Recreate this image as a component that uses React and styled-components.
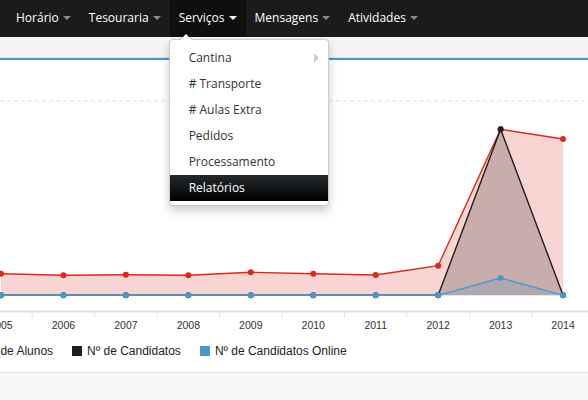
import React from 'react'
import styled, { createGlobalStyle } from 'styled-components'

const GlobalStyle = createGlobalStyle`
  html, body {
    margin: 0;
    padding: 0;
    background: #f7f7f7;
    font-family: 'Open Sans', 'DejaVu Sans', sans-serif;
    overflow: hidden;
  }
`

const menu = [
  { label: 'Horário' },
  { label: 'Tesouraria' },
  { label: 'Serviços', open: true },
  { label: 'Mensagens' },
  { label: 'Atividades' },
]

const submenu = [
  { label: 'Cantina', sub: true },
  { label: '# Transporte' },
  { label: '# Aulas Extra' },
  { label: 'Pedidos' },
  { label: 'Processamento' },
  { label: 'Relatórios', active: true },
]

const years = [2005, 2006, 2007, 2008, 2009, 2010, 2011, 2012, 2013, 2014]
const series = [
  {
    name: 'Nº de Alunos',
    stroke: '#d9291c',
    fill: 'rgba(220, 45, 30, 0.2)',
    values: [21.6, 20, 20.6, 20, 23, 21.6, 20.3, 29.6, 166, 156.3],
  },
  {
    name: 'Nº de Candidatos',
    stroke: '#1e1e1e',
    fill: 'rgba(0, 0, 0, 0.19)',
    values: [0, 0, 0, 0, 0, 0, 0, 0, 166, 0],
  },
  {
    name: 'Nº de Candidatos Online',
    stroke: '#4b97cb',
    fill: 'rgba(75, 151, 203, 0.2)',
    values: [0, 0, 0, 0, 0, 0, 0, 0, 17.3, 0],
  },
]

const X0 = 1
const STEP = 62.45
const BASE = 235.3
const px = i => X0 + STEP * i
const py = v => BASE - v

function Chart() {
  return (
    <ChartSvg width="588" height="275" viewBox="0 0 588 275">
      <line x1="0" y1="41" x2="588" y2="41" stroke="#dedede" strokeDasharray="4 3" />
      {series.map(s => {
        const pts = s.values.map((v, i) => `${px(i)},${py(v)}`).join(' L ')
        return (
          <g key={s.name}>
            <path d={`M ${px(0)},${BASE} L ${pts} L ${px(9)},${BASE} Z`} fill={s.fill} />
            <path d={`M ${pts}`} fill="none" stroke={s.stroke} strokeWidth="1.4" />
            {s.values.map((v, i) => (
              <circle key={i} cx={px(i)} cy={py(v)} r="3" fill={s.stroke} />
            ))}
          </g>
        )
      })}
      <line x1="0" y1="251.5" x2="588" y2="251.5" stroke="#e2e2e2" strokeWidth="2" />
      {years.map((y, i) => (
        <g key={y}>
          <line x1={px(i) + STEP / 2} y1="252" x2={px(i) + STEP / 2} y2="258" stroke="#e2e2e2" />
          <text x={px(i)} y="268.5" textAnchor="middle" fontSize="10.5" fill="#333"
            fontFamily="'Liberation Sans', Arial, sans-serif">{y}</text>
        </g>
      ))}
    </ChartSvg>
  )
}

export default function App() {
  return (
    <Page>
      <GlobalStyle />
      <Navbar>
        <NavList>
          {menu.map(m => (
            <NavItem key={m.label} $open={m.open}>
              {m.label}
              <Caret $open={m.open} />
              {m.open && (
                <Dropdown>
                  {submenu.map(s => (
                    <DropItem key={s.label} $active={s.active}>
                      {s.label}
                      {s.sub && <SubCaret />}
                    </DropItem>
                  ))}
                </Dropdown>
              )}
            </NavItem>
          ))}
        </NavList>
      </Navbar>
      <SubBar />
      <ChartPanel>
        <Chart />
        <Legend>
          {series.map(s => (
            <LegendItem key={s.name}>
              <Swatch $color={s.stroke} />
              {s.name}
            </LegendItem>
          ))}
        </Legend>
      </ChartPanel>
      <Footer />
    </Page>
  )
}

const Page = styled.div`
  width: 588px;
  height: 400px;
  overflow: hidden;
  background: #f7f7f7;
`

const Navbar = styled.div`
  height: 37px;
  background: #1b1b1b;
  position: relative;
  z-index: 10;
`

const NavList = styled.ul`
  display: flex;
  margin: 0;
  padding: 0 0 0 7px;
  list-style: none;
`

const NavItem = styled.li`
  position: relative;
  display: flex;
  align-items: center;
  height: 37px;
  padding: 0 9px 2px;
  box-sizing: border-box;
  font-size: 12px;
  color: #fff;
  background: ${p => (p.$open ? '#0f0f0f' : 'transparent')};
`

const Caret = styled.span`
  display: inline-block;
  margin: 1px 0 0 4px;
  border-top: 4px solid ${p => (p.$open ? '#fff' : '#8a8a8a')};
  border-left: 4px solid transparent;
  border-right: 4px solid transparent;
`

const Dropdown = styled.ul`
  position: absolute;
  top: 39px;
  left: -1px;
  width: 160px;
  margin: 0;
  padding: 5px 0;
  list-style: none;
  background: #fff;
  border: 1px solid rgba(0, 0, 0, 0.2);
  border-radius: 4px;
  box-shadow: 0 5px 10px rgba(0, 0, 0, 0.2);
  box-sizing: border-box;
  height: 167px;

  &::before {
    content: '';
    position: absolute;
    top: -7px;
    left: 9px;
    border-left: 7px solid transparent;
    border-right: 7px solid transparent;
    border-bottom: 7px solid rgba(0, 0, 0, 0.2);
  }

  &::after {
    content: '';
    position: absolute;
    top: -6px;
    left: 10px;
    border-left: 6px solid transparent;
    border-right: 6px solid transparent;
    border-bottom: 6px solid #fff;
  }
`

const DropItem = styled.li`
  position: relative;
  display: flex;
  align-items: center;
  height: 26px;
  padding: 0 19px;
  font-size: 12px;
  line-height: 26px;
  color: ${p => (p.$active ? '#fff' : '#333')};
  background: ${p => (p.$active ? 'linear-gradient(#25292c, #000)' : 'transparent')};
`

const SubCaret = styled.span`
  margin-left: auto;
  margin-right: -10px;
  border-top: 5px solid transparent;
  border-bottom: 5px solid transparent;
  border-left: 5px solid #ccc;
`

const SubBar = styled.div`
  height: 20px;
  background: #f5f5f5;
  border-bottom: 1px solid #e3e3e3;
`

const ChartPanel = styled.div`
  background: #fff;
  border-top: 2px solid #4a95c9;
  border-bottom: 1px solid #dddddd;
`

const ChartSvg = styled.svg`
  display: block;
`

const Legend = styled.div`
  display: flex;
  align-items: center;
  gap: 19px;
  height: 37px;
  padding-bottom: 5px;
  box-sizing: border-box;
  margin-left: -31px;
  font-family: 'Liberation Sans', Arial, sans-serif;
  font-size: 12px;
  color: #222;
`

const LegendItem = styled.div`
  display: flex;
  align-items: center;
  gap: 5px;
  white-space: nowrap;
`

const Swatch = styled.span`
  width: 10px;
  height: 10px;
  background: ${p => p.$color};
`

const Footer = styled.div`
  height: 40px;
  background: #f7f7f7;
`
